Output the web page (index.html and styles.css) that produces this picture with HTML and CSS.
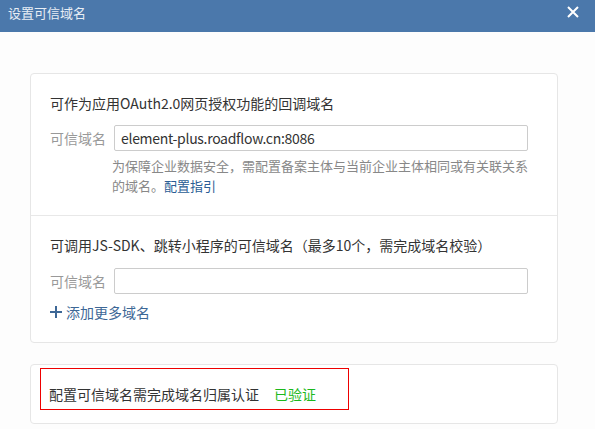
FILE: index.html
```html
<!DOCTYPE html>
<html>
<head>
  <title>设置可信域名</title>
  <link rel="stylesheet" href="styles.css">
</head>
<body>

<div class="header">
  <span class="title">设置可信域名</span>
  <svg class="close" width="12" height="12" viewBox="0 0 12 12">
    <path d="M1 1L11 11M11 1L1 11" stroke="#fff" stroke-width="2"/>
  </svg>
</div>

<div class="content">
  <div class="card">
    <div class="section">
      <div class="heading">可作为应用OAuth2.0网页授权功能的回调域名</div>
      <div class="row">
        <label class="label" for="domain1">可信域名</label>
        <input class="input" type="text" id="domain1" value="element-plus.roadflow.cn:8086">
      </div>
      <div class="help">
        <div>为保障企业数据安全，需配置备案主体与当前企业主体相同或有关联关系</div>
        <div>的域名。<a class="guide" href="#">配置指引</a></div>
      </div>
    </div>
    <div class="section second">
      <div class="heading">可调用JS-SDK、跳转小程序的可信域名（最多10个，需完成域名校验）</div>
      <div class="row">
        <label class="label" for="domain2">可信域名</label>
        <input class="input" type="text" id="domain2">
      </div>
      <a class="add" href="#">
        <svg width="12" height="12" viewBox="0 0 12 12">
          <path d="M6 0V12M0 6H12" stroke="#3d6796" stroke-width="2"/>
        </svg>
        添加更多域名
      </a>
    </div>
  </div>

  <div class="card verify">
    <div class="notice">
      配置可信域名需完成域名归属认证<span class="ok">已验证</span>
    </div>
  </div>
</div>

</body>
</html>
```

FILE: styles.css
```css
body {
  margin: 0;
  font-family: "Noto Sans CJK SC", "Liberation Sans", sans-serif;
  font-size: 14px;
  color: #333;
  background-color: #fdfdfd;
}
.header {
  height: 32px;
  background-color: #4b78ab;
  display: flex;
  align-items: center;
  justify-content: space-between;
  padding: 0 16px 0 8px;
}
.title {
  color: #e8eef5;
  font-size: 13px;
  line-height: 20px;
  margin-bottom: 6px;
}
.close {
  margin-bottom: 8px;
}
.content {
  padding: 41px 37px 0 30px;
}
.card {
  border: 1px solid #e6e6e6;
  border-radius: 4px;
  background-color: #fff;
}
.section {
  padding: 19px 29px 19px 19px;
}
.section.second {
  border-top: 1px solid #e8e8e8;
  padding-bottom: 20px;
}
.heading {
  line-height: 20px;
}
.row {
  display: flex;
  align-items: center;
  margin-top: 12px;
}
.second .row {
  margin-top: 13px;
}
.label {
  width: 64px;
  color: #999;
}
.input {
  box-sizing: border-box;
  width: 414px;
  height: 26px;
  border: 1px solid #ccc;
  border-radius: 2px;
  padding: 0 6px;
  font-family: "Noto Sans CJK SC", sans-serif;
  font-size: 14px;
  letter-spacing: -0.3px;
  color: #333;
  outline: none;
}
.help {
  margin: 5px 0 0 62px;
  font-size: 13px;
  line-height: 20px;
  color: #888;
}
.guide {
  color: #2a5d95;
  text-decoration: none;
}
.add {
  display: flex;
  align-items: center;
  gap: 4px;
  margin-top: 8px;
  line-height: 20px;
  color: #3d6796;
  text-decoration: none;
}
.verify {
  margin-top: 21px;
  padding: 3px 0 13px 9px;
}
.notice {
  width: 299px;
  border: 1px solid #e00;
  padding: 15px 0 5px 8px;
  line-height: 20px;
}
.ok {
  color: #1cb81c;
  margin-left: 15px;
}
```
